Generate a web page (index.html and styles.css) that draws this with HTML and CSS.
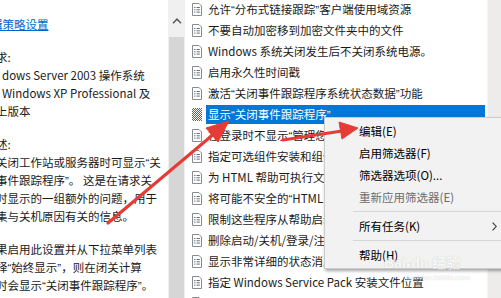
FILE: index.html
```html
<!DOCTYPE html>
<html lang="zh-CN">
<head>
  <meta charset="UTF-8">
  <title>本地组策略编辑器</title>
  <link rel="stylesheet" href="styles.css">
</head>
<body>
  <div class="window">
    <!-- Description pane -->
    <section class="desc">
      <div class="para">
        <a class="line link-line" href="#">辑策略设置</a>
      </div>
      <div class="para">
        <div class="line cut">求:</div>
        <div class="line full">dows Server 2003 操作系统</div>
        <div class="line full">Windows XP Professional 及</div>
        <div class="line cut">上版本</div>
      </div>
      <div class="para">
        <div class="line cut">述:</div>
        <div class="line cut">关闭工作站或服务器时可显示<span class="q">“</span>关</div>
        <div class="line cut">事件跟踪程序<span class="q">”</span>。 这是在请求关</div>
        <div class="line cut">时显示的一组额外的问题，用于</div>
        <div class="line cut">集与关机原因有关的信息。</div>
      </div>
      <div class="para">
        <div class="line cut">果启用此设置并从下拉菜单列表</div>
        <div class="line cut">择<span class="q">“</span>始终显示<span class="q">”</span>，则在闭关计算</div>
        <div class="line cut">时会显示<span class="q">“</span>关闭事件跟踪程序<span class="q">”</span>。</div>
      </div>
    </section>

    <!-- Left scrollbar -->
    <div class="vscroll">
      <div class="vscroll-up">
        <svg width="10" height="6" viewBox="0 0 10 6"><path d="M1 5.2L5 1.2L9 5.2" fill="none" stroke="#5f5f5f" stroke-width="1.6"/></svg>
      </div>
      <div class="vscroll-thumb"></div>
    </div>

    <!-- Settings list -->
    <section class="list">
      <div class="row"><svg class="ico"><use href="#doc"/></svg><span class="label">允许<span class="q">“</span>分布式链接跟踪<span class="q">”</span>客户端使用域资源</span></div>
      <div class="row"><svg class="ico"><use href="#doc"/></svg><span class="label">不要自动加密移到加密文件夹中的文件</span></div>
      <div class="row"><svg class="ico"><use href="#doc"/></svg><span class="label">Windows 系统关闭发生后不关闭系统电源。</span></div>
      <div class="row"><svg class="ico"><use href="#doc"/></svg><span class="label">启用永久性时间戳</span></div>
      <div class="row"><svg class="ico"><use href="#doc"/></svg><span class="label">激活<span class="q">“</span>关闭事件跟踪程序系统状态数据<span class="q">”</span>功能</span></div>
      <div class="row selected"><svg class="ico"><use href="#doc-sel"/></svg><span class="label">显示<span class="q">“</span>关闭事件跟踪程序<span class="q">”</span></span></div>
      <div class="row"><svg class="ico"><use href="#doc"/></svg><span class="label">在登录时不显示<span class="q">“</span>管理您的服务器<span class="q">”</span>页</span></div>
      <div class="row"><svg class="ico"><use href="#doc"/></svg><span class="label">指定可选组件安装和组件修复的设置</span></div>
      <div class="row"><svg class="ico"><use href="#doc"/></svg><span class="label">为 HTML 帮助可执行文件打开数据执行保护</span></div>
      <div class="row"><svg class="ico"><use href="#doc"/></svg><span class="label">将可能不安全的<span class="q">“</span>HTML 帮助<span class="q">”</span>功能限制为指定的文件夹</span></div>
      <div class="row"><svg class="ico"><use href="#doc"/></svg><span class="label">限制这些程序从帮助启动</span></div>
      <div class="row"><svg class="ico"><use href="#doc"/></svg><span class="label">删除启动/关机/登录/注销状态消息</span></div>
      <div class="row"><svg class="ico"><use href="#doc"/></svg><span class="label">显示非常详细的状态消息</span></div>
      <div class="row"><svg class="ico"><use href="#doc"/></svg><span class="label">指定 Windows Service Pack 安装文件位置</span></div>
      <div class="row"><svg class="ico"><use href="#doc"/></svg><span class="label">指定 Windows 安装文件位置</span></div>
    </section>

    <!-- Right scrollbar -->
    <div class="rscroll"></div>

    <!-- Context menu -->
    <div class="menu">
      <div class="item">编辑(E)</div>
      <div class="item">启用筛选器(F)</div>
      <div class="item">筛选器选项(O)...</div>
      <div class="item disabled">重新应用筛选器(E)</div>
      <div class="sep"></div>
      <div class="item">所有任务(K)<svg class="sub" width="5" height="9" viewBox="0 0 5 9"><path d="M.6 .6L4.2 4.5L.6 8.4" fill="none" stroke="#333" stroke-width="1.1"/></svg></div>
      <div class="sep"></div>
      <div class="item">帮助(H)</div>
    </div>

    <!-- Watermark -->
    <div class="watermark">
      <div class="wm-main">Bai<span class="wm-paw">●</span>du 经验</div>
      <div class="wm-sub">jingyan.baidu.com</div>
    </div>

    <!-- Red annotation arrows -->
    <svg class="arrows" width="501" height="298" viewBox="0 0 501 298">
      <g fill="#e63c37" stroke="#e63c37">
        <path d="M108 223L215 133" stroke-width="3.2" fill="none" stroke-linecap="round"/>
        <path d="M229 121L206 128L218 142Z" stroke-width="1"/>
        <path d="M283 140L342 131" stroke-width="3.2" fill="none" stroke-linecap="round"/>
        <path d="M358 128L339 122L342 139Z" stroke-width="1"/>
      </g>
    </svg>
  </div>

  <!-- Icon definitions -->
  <svg width="0" height="0" class="defs">
    <defs>
      <pattern id="chk" width="2" height="2" patternUnits="userSpaceOnUse">
        <rect width="2" height="2" fill="#fff"/>
        <rect width="1" height="1" fill="#2a6cb8"/>
        <rect x="1" y="1" width="1" height="1" fill="#2a6cb8"/>
      </pattern>
      <symbol id="doc" viewBox="0 0 12 13">
        <path d="M1.5 .5H8L10.5 3V12.5H1.5Z" fill="#fff" stroke="#8a8a8a"/>
        <path d="M3.2 4.5H4.4M3.2 6.8H4.4M3.2 9.1H4.4" stroke="#3d5f8f"/>
        <path d="M5.6 4.5H8.8M5.6 6.8H8.8M5.6 9.1H8.8" stroke="#6a6a6a"/>
      </symbol>
      <symbol id="doc-sel" viewBox="0 0 12 13">
        <rect x="1" y="0" width="10" height="13" fill="url(#chk)"/>
      </symbol>
    </defs>
  </svg>
</body>
</html>
```

FILE: styles.css
```css
/* Reset */
* {
  margin: 0;
  padding: 0;
  box-sizing: border-box;
}

body {
  font-family: "Noto Sans CJK SC", sans-serif;
  font-size: 11.5px;
  color: #1a1a1a;
  background-color: #fff;
}

.q {
  font-family: "Liberation Sans", sans-serif;
}

.window {
  position: relative;
  display: flex;
  width: 501px;
  height: 298px;
  overflow: hidden;
}

/* Description pane */
.desc {
  width: 168px;
  flex-shrink: 0;
  padding-top: 15px;
  overflow: hidden;
  background-color: #fff;
}

.para {
  margin-bottom: 15px;
}

.line {
  display: block;
  height: 18px;
  line-height: 18px;
  white-space: nowrap;
}

.line.cut {
  margin-left: -4px;
}

.line.full {
  margin-left: 2px;
}

.link-line {
  margin-left: -9px;
  color: #0066cc;
  text-decoration: underline;
}

/* Left scrollbar */
.vscroll {
  width: 17px;
  flex-shrink: 0;
  display: flex;
  flex-direction: column;
  background-color: #f0f0f0;
}

.vscroll-up {
  height: 37px;
  display: flex;
  justify-content: center;
  padding-top: 18px;
}

.vscroll-thumb {
  flex: 1;
  margin: 0 1px;
  background-color: #d6d6d6;
}

/* Settings list */
.list {
  flex: 1;
  overflow: hidden;
  margin-top: -1px;
  background-color: #fff;
}

.row {
  display: flex;
  align-items: center;
  height: 21px;
  padding-left: 6px;
  white-space: nowrap;
}

.ico {
  width: 12px;
  height: 13px;
  flex-shrink: 0;
}

.label {
  flex: 1;
  margin: 0 2px 0 3px;
  padding-left: 2px;
  height: 19px;
  line-height: 19px;
  overflow: hidden;
}

.row.selected .label {
  background-color: #0078d7;
  color: #fff;
}

/* Right scrollbar */
.rscroll {
  width: 14px;
  flex-shrink: 0;
  background-color: #eeebeb;
  border-left: 1px solid #f6f6f6;
}

/* Context menu */
.menu {
  position: absolute;
  left: 324px;
  top: 117px;
  width: 190px;
  padding: 2px 0 2px;
  background-color: #f2f2f2;
  border: 1px solid #cccccc;
  box-shadow: 1px 2px 3px rgba(0, 0, 0, 0.35);
  color: #000;
}

.item {
  display: flex;
  align-items: center;
  justify-content: space-between;
  height: 22px;
  padding: 0 16px 0 34px;
}

.item.disabled {
  color: #6d6d6d;
}

.sep {
  height: 1px;
  margin: 3px 0 3px 28px;
  background-color: #d7d7d7;
}

/* Watermark */
.watermark {
  position: absolute;
  left: 384px;
  top: 256px;
  color: #fff;
  opacity: 0.55;
  text-shadow: 0 0 1px rgba(110, 110, 110, 0.7);
  pointer-events: none;
}

.wm-main {
  font-family: "Liberation Sans", "Noto Sans CJK SC", sans-serif;
  font-size: 14px;
  font-weight: bold;
  line-height: 15px;
}

.wm-paw {
  font-size: 9px;
}

.wm-sub {
  font-family: "Liberation Sans", sans-serif;
  font-size: 8px;
  padding-left: 22px;
}

/* Annotations */
.arrows {
  position: absolute;
  left: 0;
  top: 0;
  pointer-events: none;
}

.defs {
  position: absolute;
}
```
